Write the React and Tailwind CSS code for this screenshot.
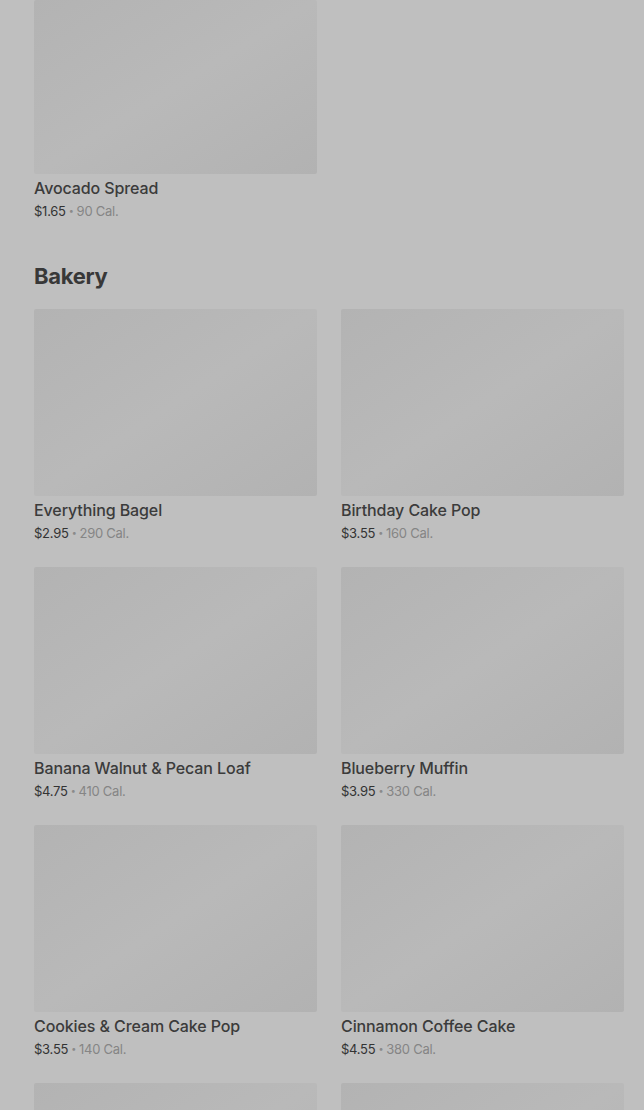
import React from "react";

const bakery = [
  ["Everything Bagel", "$2.95", "290 Cal."],
  ["Birthday Cake Pop", "$3.55", "160 Cal."],
  ["Banana Walnut & Pecan Loaf", "$4.75", "410 Cal."],
  ["Blueberry Muffin", "$3.95", "330 Cal."],
  ["Cookies & Cream Cake Pop", "$3.55", "140 Cal."],
  ["Cinnamon Coffee Cake", "$4.55", "380 Cal."],
  ["Plain Bagel", "$2.45", "280 Cal."],
  ["Butter Croissant", "$3.45", "260 Cal."],
];

function Card({ name, price, cal, tall = true }) {
  return (
    <div className="flex flex-col">
      <div
        className={`${tall ? "h-[187px]" : "h-[174px]"} w-full rounded-[2px] bg-gradient-to-br from-[#b3b3b3] via-[#b9b9b9] to-[#b2b2b2]`}
      />
      <div className="mt-[3px] text-[16px] leading-[22px] font-medium text-[#3b3b3b] tracking-[-0.1px]">{name}</div>
      <div className="mt-[2px] flex items-center text-[13px] leading-[20px] text-[#333] tracking-[-0.25px]">
        <span>{price}</span>
        <span className="mx-[3px] text-[9px] leading-[20px] text-[#8a8a8a]">•</span>
        <span className="text-[#858585]">{cal}</span>
      </div>
    </div>
  );
}

export default function App() {
  return (
    <div
      className="h-[1110px] w-[644px] bg-[#bfbfbf] pl-[34px] pr-[20px] overflow-hidden"
      style={{ fontFamily: "Inter, 'Noto Sans', sans-serif" }}
    >
      <div className="grid grid-cols-2 gap-x-[24px]">
        <Card name="Avocado Spread" price="$1.65" cal="90 Cal." tall={false} />
      </div>
      <h2 className="mt-[39px] mb-[17px] text-[22px] leading-[32px] font-bold text-[#383838] tracking-[-0.3px]">
        Bakery
      </h2>
      <div className="grid grid-cols-2 gap-x-[24px] gap-y-[24px]">
        {bakery.map(([n, p, c]) => (
          <Card key={n} name={n} price={p} cal={c} />
        ))}
      </div>
    </div>
  );
}
